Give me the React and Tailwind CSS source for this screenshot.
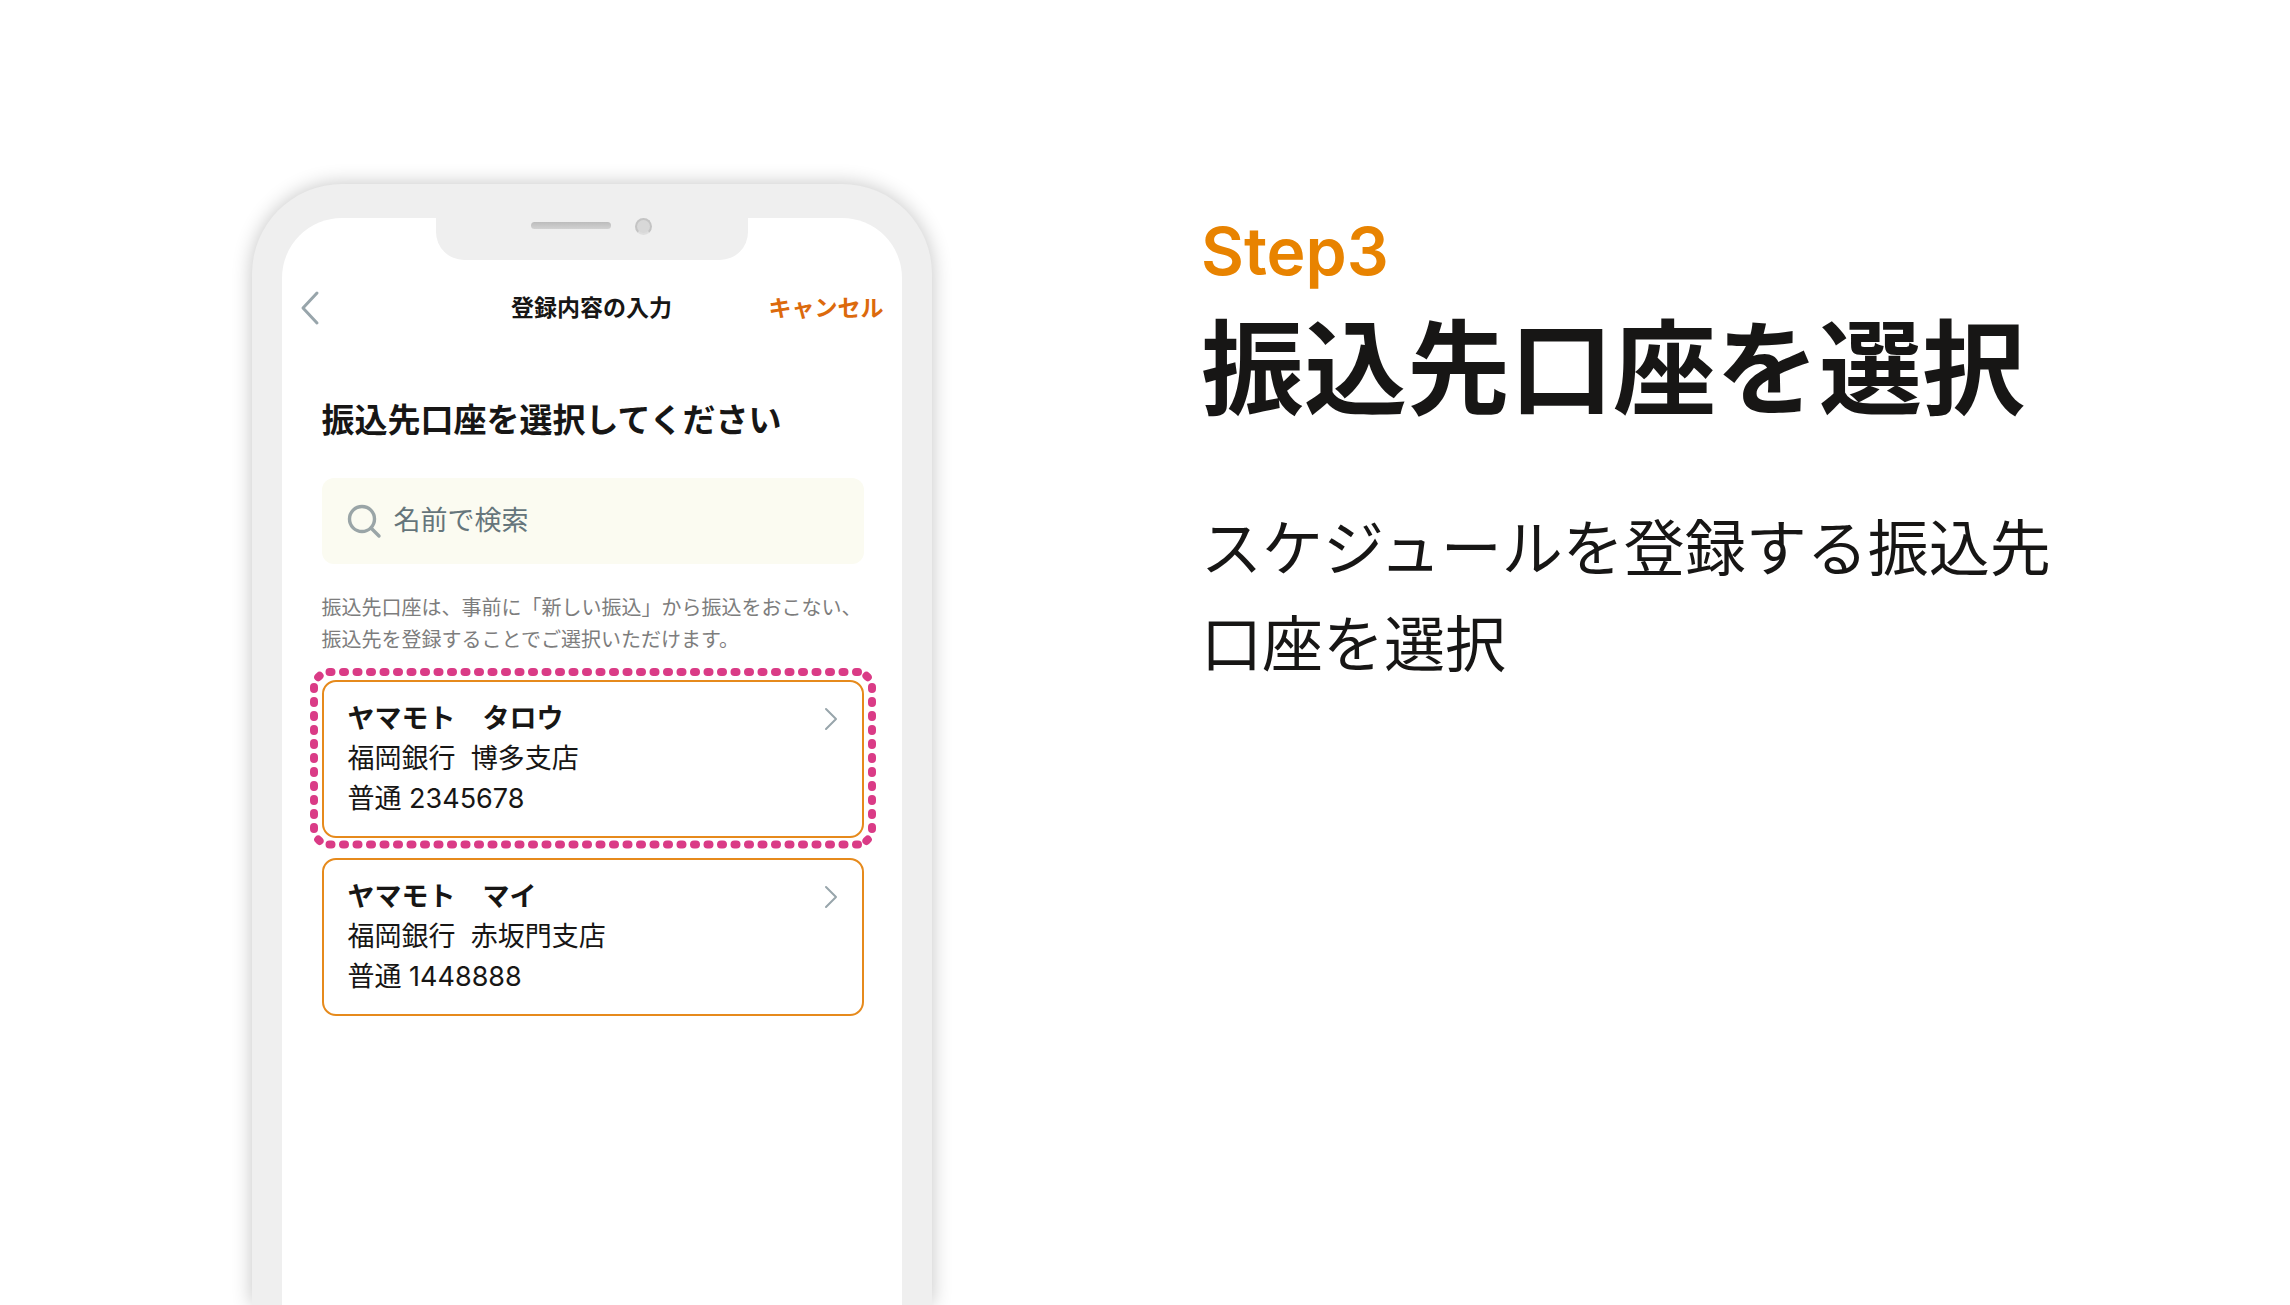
import React from 'react';

const accounts = [
  { name: 'ヤマモト　タロウ', bank: '福岡銀行', branch: '博多支店', number: '2345678', highlighted: true },
  { name: 'ヤマモト　マイ', bank: '福岡銀行', branch: '赤坂門支店', number: '1448888' },
];

function ChevronLeft() {
  return (
    <svg className="h-9 w-5" viewBox="0 0 20 36" fill="none" stroke="#98a5ab" strokeWidth="3" strokeLinecap="round" strokeLinejoin="round" aria-hidden="true">
      <path d="M17 3L3 18L17 33" />
    </svg>
  );
}

function ChevronRight() {
  return (
    <svg className="mt-2 h-6 w-3.5 shrink-0" viewBox="0 0 14 24" fill="none" stroke="#98a5ab" strokeWidth="2" strokeLinecap="round" strokeLinejoin="round" aria-hidden="true">
      <path d="M2 2L12 12L2 22" />
    </svg>
  );
}

function SearchIcon() {
  return (
    <svg className="size-9 shrink-0" viewBox="0 0 36 36" fill="none" stroke="#9aa5a7" strokeWidth="3.4" strokeLinecap="round" aria-hidden="true">
      <circle cx="16" cy="16" r="12.5" />
      <path d="M25 25L33 33" />
    </svg>
  );
}

// Round-capped dashes: one run per side plus a single dash in each corner
function DottedFrame() {
  return (
    <svg
      className="pointer-events-none absolute -inset-3 h-[calc(100%+24px)] w-[calc(100%+24px)]"
      viewBox="0 0 566 182"
      preserveAspectRatio="none"
      fill="none"
      stroke="#da3b86"
      strokeWidth="8"
      strokeLinecap="round"
      aria-hidden="true"
    >
      <path d="M19.5 4H548M19.5 176.5H548" strokeDasharray="2 11.5" />
      <path d="M4 19V162M562 19V162" strokeDasharray="2 12" />
      <path d="M8.2 9.2L9.6 7.8M556.4 7.8L557.8 9.2M8.2 171.5L9.6 172.9M556.4 172.9L557.8 171.5" />
    </svg>
  );
}

function AccountCard({ account }) {
  return (
    <li className="relative">
      <button
        type="button"
        className="flex w-full items-start justify-between rounded-[14px] border-2 border-[#e68a1c] bg-white px-6 py-[17px] text-left text-[27px] leading-10"
      >
        <span className="flex flex-col">
          <span className="font-bold">{account.name}</span>
          <span className="whitespace-pre">{account.bank}{'  '}{account.branch}</span>
          <span>普通 {account.number}</span>
        </span>
        <ChevronRight />
      </button>
      {account.highlighted && <DottedFrame />}
    </li>
  );
}

function Phone() {
  return (
    <div className="flex w-full max-w-[680px] flex-col rounded-t-[90px] bg-[#efefef] px-[30px] pt-[34px] shadow-[0_0_20px_rgba(0,0,0,0.24)]">
      <div className="flex-1 rounded-t-[60px] bg-white">
        {/* Notch */}
        <div className="mx-auto flex h-[42px] w-[312px] items-start justify-center gap-6 rounded-b-[28px] bg-[#efefef]">
          <span className="mt-1 h-[7px] w-20 rounded-full bg-linear-to-b from-[#bcbcbc] to-[#d2d2d2]" />
          <span className="size-[17px] rounded-full border-2 border-[#c4c4c4] border-b-[#dedede] bg-[#d8d8d8]" />
        </div>

        {/* Nav bar */}
        <header className="grid h-24 grid-cols-[1fr_auto_1fr] items-center px-[18px] text-[23px] font-bold">
          <button type="button" aria-label="戻る" className="justify-self-start">
            <ChevronLeft />
          </button>
          <h2>登録内容の入力</h2>
          <button type="button" className="justify-self-end text-[#dc6a0c]">キャンセル</button>
        </header>

        <div className="pt-10 pr-[38px] pl-10">
          <h3 className="text-[33px] leading-12 font-bold">振込先口座を選択してください</h3>

          <label className="mt-[34px] flex h-[86px] items-center gap-3 rounded-xl bg-[#fbfbf1] px-6">
            <SearchIcon />
            <input
              type="search"
              aria-label="名前で検索"
              placeholder="名前で検索"
              className="min-w-0 flex-1 bg-transparent text-[27px] outline-none placeholder:text-[#65757b]"
            />
          </label>

          <p className="mt-7 text-[20px] leading-8 text-[#7d7d7d]">
            振込先口座は、事前に「新しい振込」から振込をおこない、
            <br />
            振込先を登録することでご選択いただけます。
          </p>

          <ul className="mt-6 flex flex-col gap-5">
            {accounts.map((account) => (
              <AccountCard key={account.number} account={account} />
            ))}
          </ul>
        </div>
      </div>
    </div>
  );
}

export default function App() {
  return (
    <main
      lang="ja"
      className="grid min-h-screen grid-cols-2 overflow-hidden bg-white font-['Inter','Noto_Sans_CJK_JP',sans-serif] text-[#171615]"
    >
      <section className="flex justify-center pt-[184px] pl-[38px]">
        <Phone />
      </section>

      <section className="pt-[207px] pr-10 pl-14">
        <p className="text-[66px] leading-[88px] font-semibold text-[#e88300]">Step3</p>
        <h1 className="text-[103px] leading-[150px] font-bold">振込先口座を選択</h1>
        <p className="mt-14 max-w-[860px] text-[61px] leading-[96px]">
          スケジュールを登録する振込先口座を選択
        </p>
      </section>
    </main>
  );
}
